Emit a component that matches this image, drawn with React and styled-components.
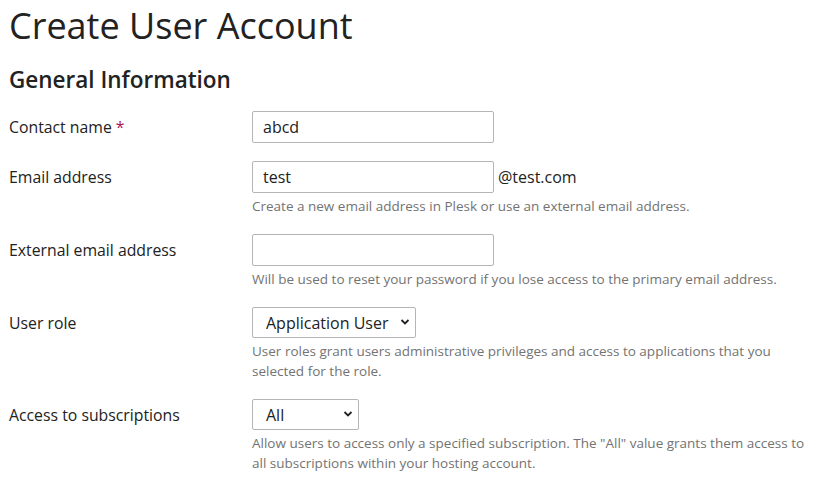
import React from "react";
import styled, { createGlobalStyle } from "styled-components";

const Global = createGlobalStyle`
  html, body { margin: 0; padding: 0; background: #fff; }
  body { font-family: "Open Sans", "Liberation Sans", sans-serif; color: #222; }
  * { box-sizing: border-box; }
`;

const Page = styled.div`
  padding: 4px 9px 0 9px;
`;

const Title = styled.h1`
  margin: 0;
  font-size: 36px;
  font-weight: 400;
  line-height: 44px;
  color: #222;
`;

const SectionTitle = styled.h2`
  margin: 17px 0 16px;
  font-size: 22.5px;
  font-weight: 600;
  line-height: 30px;
  color: #222;
`;

const Row = styled.div`
  display: grid;
  grid-template-columns: 243px 1fr;
  margin-bottom: 18px;
`;

const Label = styled.label`
  font-size: 15.8px;
  line-height: 32px;
  color: #222;
`;

const Required = styled.span`
  color: #a4145c;
  margin-left: 4px;
`;

const Field = styled.div`
  display: flex;
  flex-direction: column;
  align-items: flex-start;
`;

const Inline = styled.div`
  display: flex;
  align-items: center;
  gap: 4px;
  font-size: 16px;
`;

const TextInput = styled.input`
  width: 242px;
  height: 32px;
  border: 1px solid #b5b5b5;
  border-radius: 2px;
  padding: 0 10px;
  font-family: inherit;
  font-size: 16px;
  color: #222;
  outline: none;
`;

const SelectWrap = styled.div`
  position: relative;
  display: inline-block;
  width: ${(p) => p.$width}px;
`;

const Select = styled.select`
  appearance: none;
  width: 100%;
  height: 31px;
  border: 1px solid #b5b5b5;
  border-radius: 2px;
  padding: 0 20px 0 13px;
  font-family: inherit;
  font-size: 16px;
  color: #222;
  background: #fff;
  outline: none;
`;

const Chevron = styled.svg`
  position: absolute;
  right: 6px;
  top: 11px;
  pointer-events: none;
`;

const Hint = styled.div`
  margin-top: 3px;
  font-size: 13.5px;
  line-height: 20px;
  color: #737373;
  max-width: 560px;
`;

const Arrow = () => (
  <Chevron width="10" height="8" viewBox="0 0 10 8">
    <path d="M1.5 2 L5 5.5 L8.5 2" fill="none" stroke="#222" strokeWidth="1.8" />
  </Chevron>
);

export default function App() {
  return (
    <>
      <Global />
      <Page>
        <Title>Create User Account</Title>
        <SectionTitle>General Information</SectionTitle>

        <Row>
          <Label>Contact name<Required>*</Required></Label>
          <Field>
            <TextInput defaultValue="abcd" />
          </Field>
        </Row>

        <Row>
          <Label>Email address</Label>
          <Field>
            <Inline>
              <TextInput defaultValue="test" />
              <span>@test.com</span>
            </Inline>
            <Hint>Create a new email address in Plesk or use an external email address.</Hint>
          </Field>
        </Row>

        <Row>
          <Label>External email address</Label>
          <Field>
            <TextInput defaultValue="" />
            <Hint>Will be used to reset your password if you lose access to the primary email address.</Hint>
          </Field>
        </Row>

        <Row>
          <Label>User role</Label>
          <Field>
            <SelectWrap $width={164}>
              <Select defaultValue="app">
                <option value="app">Application User</option>
              </Select>
              <Arrow />
            </SelectWrap>
            <Hint>User roles grant users administrative privileges and access to applications that you selected for the role.</Hint>
          </Field>
        </Row>

        <Row>
          <Label>Access to subscriptions</Label>
          <Field>
            <SelectWrap $width={107}>
              <Select defaultValue="all">
                <option value="all">All</option>
              </Select>
              <Arrow />
            </SelectWrap>
            <Hint>Allow users to access only a specified subscription. The "All" value grants them access to all subscriptions within your hosting account.</Hint>
          </Field>
        </Row>
      </Page>
    </>
  );
}
